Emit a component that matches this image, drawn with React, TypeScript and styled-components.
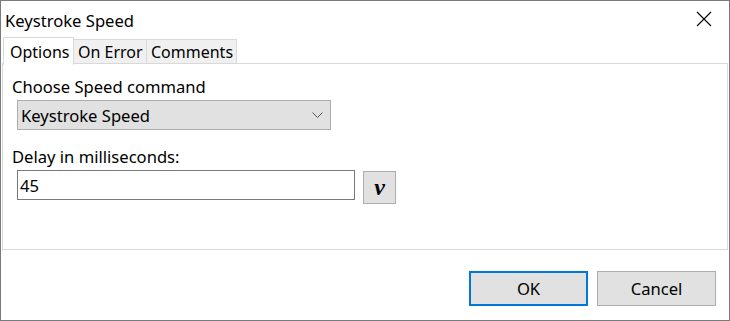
import React from 'react';
import styled, { createGlobalStyle } from 'styled-components';

const GlobalStyle = createGlobalStyle`
  html, body {
    margin: 0;
    padding: 0;
    background: #ffffff;
  }
  * {
    box-sizing: border-box;
  }
`;

const Window = styled.div`
  width: 730px;
  height: 321px;
  border: 1px solid #7a7a7a;
  background: #ffffff;
  display: flex;
  flex-direction: column;
  font-family: 'Noto Sans', 'Open Sans', sans-serif;
  font-size: 16.6px;
  color: #000000;
  overflow: hidden;
`;

const TitleBar = styled.div`
  height: 35px;
  display: flex;
  align-items: center;
  justify-content: space-between;
  padding: 0 0 0 4px;
`;

const Title = styled.span`
  line-height: 20px;
  margin-top: 5px;
`;

const CloseButton = styled.div`
  width: 46px;
  height: 35px;
  display: flex;
  align-items: center;
  justify-content: center;
  margin-right: 2px;
`;

const TabStrip = styled.div`
  display: flex;
  align-items: flex-end;
  height: 28px;
  padding-left: 2px;
  position: relative;
  z-index: 1;
`;

const Tab = styled.div<{ active?: boolean; w: number }>`
  width: ${(p) => p.w}px;
  height: ${(p) => (p.active ? '28px' : '25px')};
  padding-left: ${(p) => (p.active ? '6px' : '4px')};
  border: 1px solid #d9d9d9;
  border-bottom: ${(p) => (p.active ? 'none' : '1px solid #d9d9d9')};
  border-left: ${(p) => (p.active ? '1px solid #d9d9d9' : 'none')};
  background: ${(p) => (p.active ? '#ffffff' : '#f0f0f0')};
  display: flex;
  align-items: center;
  font-size: 16px;
  line-height: 18px;
  white-space: nowrap;
  margin-bottom: ${(p) => (p.active ? '-1px' : '0')};
  padding-top: ${(p) => (p.active ? '0' : '1px')};
`;

const Panel = styled.div`
  margin: 0 1px 0 1px;
  height: 187px;
  border: 1px solid #d9d9d9;
  margin-top: -1px;
  padding: 13px 0 0 9px;
  display: flex;
  flex-direction: column;
`;

const Label = styled.div<{ gap?: number }>`
  line-height: 20px;
  height: 21px;
  margin-top: ${(p) => p.gap ?? 0}px;
`;

const Select = styled.div`
  margin: 2px 0 0 5px;
  width: 314px;
  height: 30px;
  background: #e1e1e1;
  border: 1px solid #adadad;
  display: flex;
  align-items: center;
  justify-content: space-between;
  padding: 0 7px 0 3px;
`;

const FieldRow = styled.div`
  display: flex;
  align-items: flex-start;
  gap: 8px;
  margin: 2px 0 0 5px;
`;

const TextInput = styled.div`
  width: 338px;
  height: 30px;
  border: 1px solid #7a7a7a;
  display: flex;
  align-items: center;
  padding-left: 2px;
`;

const VarButton = styled.div`
  width: 33px;
  height: 33px;
  margin-top: 1px;
  background: #e1e1e1;
  border: 1px solid #adadad;
  display: flex;
  align-items: center;
  justify-content: center;
  font-family: 'Liberation Serif', serif;
  font-style: italic;
  font-weight: bold;
  font-size: 24px;
  line-height: 1;
  padding-bottom: 2px;
`;

const Footer = styled.div`
  flex: 1;
  display: flex;
  justify-content: flex-end;
  align-items: flex-start;
  gap: 9px;
  padding: 21px 13px 0 0;
`;

const Button = styled.div<{ primary?: boolean }>`
  width: 119px;
  height: 35px;
  background: #e1e1e1;
  border: ${(p) => (p.primary ? '2px solid #0078d7' : '1px solid #adadad')};
  display: flex;
  align-items: center;
  justify-content: center;
`;

const Chevron = () => (
  <svg width="11" height="7" viewBox="0 0 11 7">
    <path d="M0.5 0.5 L5.5 5.5 L10.5 0.5" fill="none" stroke="#555" strokeWidth="1" />
  </svg>
);

const CloseIcon = () => (
  <svg width="16" height="16" viewBox="0 0 16 16">
    <path d="M1 1 L15 15 M15 1 L1 15" stroke="#000" strokeWidth="1.1" />
  </svg>
);

const App: React.FC = () => (
  <>
    <GlobalStyle />
    <Window>
      <TitleBar>
        <Title>Keystroke Speed</Title>
        <CloseButton>
          <CloseIcon />
        </CloseButton>
      </TitleBar>
      <TabStrip>
        <Tab active w={71}>Options</Tab>
        <Tab w={73}>On Error</Tab>
        <Tab w={90}>Comments</Tab>
      </TabStrip>
      <Panel>
        <Label>Choose Speed command</Label>
        <Select>
          <span>Keystroke Speed</span>
          <Chevron />
        </Select>
        <Label gap={17}>Delay in milliseconds:</Label>
        <FieldRow>
          <TextInput>45</TextInput>
          <VarButton>v</VarButton>
        </FieldRow>
      </Panel>
      <Footer>
        <Button primary>OK</Button>
        <Button>Cancel</Button>
      </Footer>
    </Window>
  </>
);

export default App;
